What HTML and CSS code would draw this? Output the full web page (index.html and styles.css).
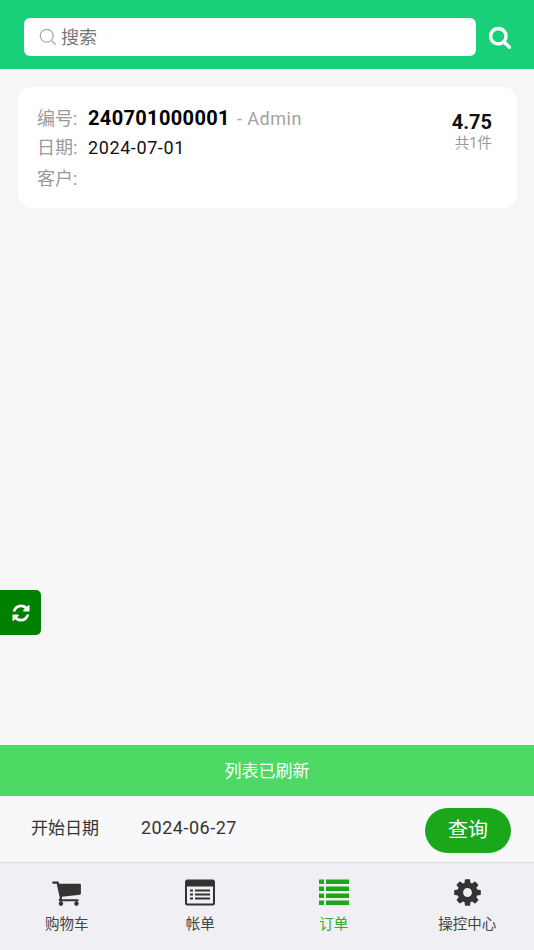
FILE: index.html
```html
<!DOCTYPE html>
<html lang="zh-CN">

<head>
    <meta charset="UTF-8">
    <meta name="viewport" content="width=device-width, initial-scale=1.0">
    <title>订单</title>
    <link rel="stylesheet" href="styles.css">
</head>

<body>
    <!-- Search bar -->
    <header class="search-bar">
        <div class="search-box">
            <svg class="search-box-icon" viewBox="0 0 20 20">
                <circle cx="8.6" cy="8.6" r="7.2"></circle>
                <path d="M13.9 13.9L18.6 18.6"></path>
            </svg>
            <span class="search-box-text">搜索</span>
        </div>
        <svg class="search-btn" viewBox="0 0 1792 1792">
            <path d="M1216 832q0-185-131.500-316.500t-316.500-131.500-316.500 131.500-131.500 316.500 131.500 316.500 316.500 131.500 316.500-131.500 131.500-316.500zm512 832q0 52-38 90t-90 38q-54 0-90-38l-343-342q-179 124-399 124-143 0-273.500-55.500t-225-150-150-225-55.500-273.500 55.500-273.500 150-225 225-150 273.500-55.500 273.500 55.500 225 150 150 225 55.500 273.500q0 220-124 399l343 343q37 37 37 90z"></path>
        </svg>
    </header>

    <!-- Order list -->
    <main class="order-list">
        <div class="order-card">
            <div class="order-info">
                <p class="order-row">
                    <span class="order-label">编号:</span>
                    <span class="order-no">240701000001</span>
                    <span class="order-user">- Admin</span>
                </p>
                <p class="order-row">
                    <span class="order-label">日期:</span>
                    <span class="order-date">2024-07-01</span>
                </p>
                <p class="order-row order-row-last">
                    <span class="order-label">客户:</span>
                </p>
            </div>
            <div class="order-total">
                <div class="order-amount">4.75</div>
                <div class="order-count">共1件</div>
            </div>
        </div>

        <div class="refresh-btn">
            <svg viewBox="0 0 1792 1792">
                <path d="M1639 1056q0 5-1 7-64 268-268 434.500t-478 166.500q-146 0-282.500-55t-243.500-157l-129 129q-19 19-45 19t-45-19-19-45v-448q0-26 19-45t45-19h448q26 0 45 19t19 45-19 45l-137 137q71 66 161 102t187 36q134 0 250-65t186-179q11-17 53-117 8-23 30-23h192q13 0 22.500 9.500t9.500 22.500zm25-800v448q0 26-19 45t-45 19h-448q-26 0-45-19t-19-45 19-45l138-138q-148-137-349-137-134 0-250 65t-186 179q-11 17-53 117-8 23-30 23h-199q-13 0-22.500-9.500t-9.500-22.500v-7q65-268 270-434.500t480-166.500q146 0 284 55.500t245 156.500l130-129q19-19 45-19t45 19 19 45z"></path>
            </svg>
        </div>
    </main>

    <div class="notice">列表已刷新</div>

    <!-- Date filter -->
    <div class="date-filter">
        <span class="date-label">开始日期</span>
        <span class="date-value">2024-06-27</span>
        <span class="query-btn">查询</span>
    </div>

    <!-- Tab bar -->
    <nav class="tabbar">
        <div class="tab">
            <svg class="tab-icon tab-icon-large" viewBox="0 0 1792 1792">
                <path d="M704 1536q0 52-38 90t-90 38-90-38-38-90 38-90 90-38 90 38 38 90zm896 0q0 52-38 90t-90 38-90-38-38-90 38-90 90-38 90 38 38 90zm128-1088v512q0 24-16.500 42.500t-40.500 21.500l-1044 122q13 60 13 70 0 16-24 64h920q26 0 45 19t19 45-19 45-45 19h-1024q-26 0-45-19t-19-45q0-11 8-31.500t16-36 21.500-40 15.500-29.500l-177-823h-204q-26 0-45-19t-19-45 19-45 45-19h256q16 0 28.500 6.500t19.500 15.500 13 24.500 8 26 5.500 29.500 4.500 26h1201q26 0 45 19t19 45z"></path>
            </svg>
            <span class="tab-text">购物车</span>
        </div>
        <div class="tab">
            <svg class="tab-icon" viewBox="0 0 30 26">
                <path fill-rule="evenodd" d="M2.500 0H27.500Q30 0 30 2.500V23.500Q30 26 27.500 26H2.500Q0 26 0 23.500V2.500Q0 0 2.500 0ZM2 7V23.200Q2 24 2.800 24H27.200Q28 24 28 23.200V7ZM5 10H8V12H5ZM10 10H25V12H10ZM5 14H8V16H5ZM10 14H25V16H10ZM5 18H8V20H5ZM10 18H25V20H10Z"></path>
            </svg>
            <span class="tab-text">帐单</span>
        </div>
        <div class="tab tab-active">
            <svg class="tab-icon" viewBox="0 0 30 26">
                <path d="M0 0H5V4.500H0ZM7 0H30V4.500H7ZM0 7H5V11.500H0ZM7 7H30V11.500H7ZM0 14H5V18.500H0ZM7 14H30V18.500H7ZM0 21H5V25.500H0ZM7 21H30V25.500H7Z"></path>
            </svg>
            <span class="tab-text">订单</span>
        </div>
        <div class="tab">
            <svg class="tab-icon tab-icon-large" viewBox="0 0 1792 1792">
                <path d="M1152 896q0-106-75-181t-181-75-181 75-75 181 75 181 181 75 181-75 75-181zm512-109v222q0 12-8 23t-20 13l-185 28q-19 54-39 91 35 50 107 138 10 12 10 25t-9 23q-27 37-99 108t-94 71q-12 0-26-9l-138-108q-44 23-91 38-16 136-29 186-7 28-36 28h-222q-14 0-24.500-8.500t-11.500-21.500l-28-184q-49-16-90-37l-141 107q-10 9-25 9-14 0-25-11-126-114-165-168-7-10-7-23 0-12 8-23 15-21 51-66.500t54-70.500q-27-50-41-99l-183-27q-13-2-21-12.500t-8-23.500v-222q0-12 8-23t19-13l186-28q14-46 39-92-40-57-107-138-10-12-10-24 0-10 9-23 26-36 98.500-107.500t94.500-71.500q13 0 26 10l138 107q44-23 91-38 16-136 29-186 7-28 36-28h222q14 0 24.500 8.500t11.500 21.500l28 184q49 16 90 37l142-107q9-9 24-9 13 0 25 10 129 119 165 170 7 8 7 22 0 12-8 23-15 21-51 66.500t-54 70.500q26 50 41 98l183 28q13 2 21 12.500t8 23.500z"></path>
            </svg>
            <span class="tab-text">操控中心</span>
        </div>
    </nav>
</body>

</html>
```

FILE: styles.css
```css
* {
    box-sizing: border-box;
}

body {
    display: flex;
    flex-direction: column;
    height: 950px;
    margin: 0;
    overflow: hidden;
    background-color: #f6f6f7;
    font-family: Roboto, "Noto Sans CJK SC", sans-serif;
}

/* Search bar */
.search-bar {
    display: flex;
    align-items: center;
    height: 69px;
    padding: 5px 22px 0 24px;
    background-color: #18d078;
}

.search-box {
    display: flex;
    align-items: center;
    flex: 1;
    height: 38px;
    padding-left: 15px;
    background-color: #ffffff;
    border-radius: 6px;
}

.search-box-icon {
    width: 18px;
    height: 18px;
    margin-right: 4px;
    fill: none;
    stroke: #aaaaaa;
    stroke-width: 1.4;
}

.search-box-text {
    margin-bottom: 2px;
    font-size: 18px;
    color: #777777;
}

.search-btn {
    width: 24px;
    height: 24px;
    margin-left: 12px;
    fill: #ffffff;
}

/* Order list */
.order-list {
    position: relative;
    flex: 1;
    padding: 18px 17px 0 18px;
}

.order-card {
    display: flex;
    justify-content: space-between;
    height: 121px;
    padding: 16px 25px 0 19px;
    background-color: #ffffff;
    border-radius: 14px;
}

.order-row {
    display: flex;
    align-items: baseline;
    height: 30px;
    margin: 0;
    font-size: 18px;
    line-height: 30px;
}

.order-row-last {
    margin-top: 1px;
}

.order-label {
    width: 51px;
    color: #999999;
}

.order-no {
    font-size: 20px;
    font-weight: 700;
    letter-spacing: 0.35px;
    color: #000000;
}

.order-user {
    margin-left: 7px;
    font-size: 18px;
    letter-spacing: 0.5px;
    color: #a3a3a3;
}

.order-date {
    font-size: 18px;
    letter-spacing: 0.6px;
    color: #111111;
}

.order-total {
    padding-top: 7px;
    text-align: right;
}

.order-amount {
    font-size: 20px;
    font-weight: 700;
    line-height: 24px;
    color: #111111;
}

.order-count {
    font-size: 14.500px;
    line-height: 20px;
    color: #999999;
}

.refresh-btn {
    position: absolute;
    left: 0;
    top: 521px;
    display: flex;
    align-items: center;
    justify-content: center;
    width: 41px;
    height: 45px;
    background-color: #008000;
    border-radius: 0 5px 5px 0;
}

.refresh-btn svg {
    width: 20px;
    height: 20px;
    fill: #ffffff;
}

.notice {
    height: 51px;
    padding-top: 2px;
    font-size: 17px;
    line-height: 49px;
    text-align: center;
    color: #ffffff;
    background-color: #4cd964;
}

/* Date filter */
.date-filter {
    display: flex;
    align-items: center;
    height: 66px;
    padding: 0 23px 0 31px;
    background-color: #f8f8fa;
}

.date-label {
    width: 110px;
    margin-bottom: 5px;
    font-size: 17px;
    color: #333333;
}

.date-value {
    flex: 1;
    margin-bottom: 4px;
    font-size: 18px;
    letter-spacing: 0.5px;
    color: #333333;
}

.query-btn {
    width: 86px;
    height: 45px;
    margin-top: 2px;
    font-size: 20px;
    line-height: 45px;
    text-align: center;
    color: #ffffff;
    background-color: #1aa71a;
    border-radius: 23px;
}

/* Tab bar */
.tabbar {
    display: flex;
    height: 88px;
    background-color: #efeff4;
    border-top: 1px solid #dddddd;
}

.tab {
    display: flex;
    flex-direction: column;
    align-items: center;
    flex: 1;
    padding-top: 16px;
    color: #333333;
}

.tab-active {
    color: #1aa71a;
}

.tab-icon {
    width: 30px;
    height: 27px;
    fill: currentColor;
}

.tab-icon-large {
    width: 31px;
    height: 31px;
    margin: -2px 0;
}

.tab-text {
    margin-top: 9px;
    font-size: 14.500px;
    line-height: 20px;
    color: #444444;
}

.tab-active .tab-text {
    color: #35aa35;
}
```
